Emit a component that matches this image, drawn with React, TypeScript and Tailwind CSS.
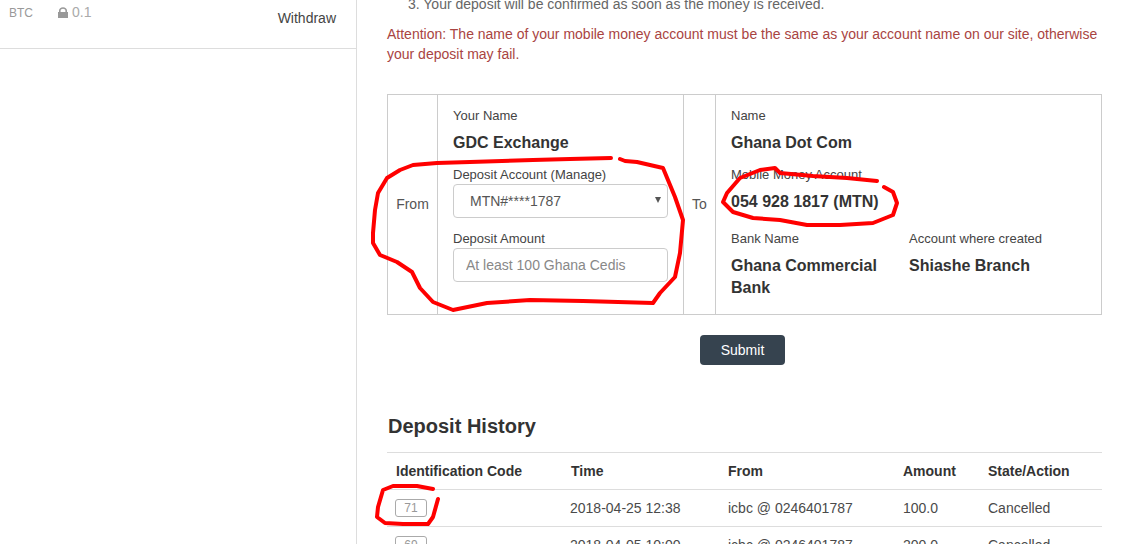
const rows = [
  { code: "71", time: "2018-04-25 12:38", from: "icbc @ 0246401787", amount: "100.0", state: "Cancelled" },
  { code: "69", time: "2018-04-05 10:00", from: "icbc @ 0246401787", amount: "200.0", state: "Cancelled" },
];

const Field = ({ label, value }: { label: string; value: string }) => (
  <div>
    <div className="text-[13px] leading-5 text-[#444]">{label}</div>
    <div className="mt-[6px] text-base font-bold leading-[22px] text-[#333]">{value}</div>
  </div>
);

const App = () => {
  return (
    <div className="relative flex h-[544px] w-[1142px] overflow-hidden bg-white font-['Liberation_Sans',Arial,sans-serif] text-sm text-[#333]">
      <aside className="h-full w-[357px] shrink-0 border-r border-[#ddd]">
        <div className="flex h-[49px] border-b border-[#ddd] pl-[9px] pr-5">
          <span className="mt-[5px] text-xs leading-4 text-[#999]">BTC</span>
          <span className="ml-[25px] mt-[4px] flex h-4 items-center gap-[4px] text-sm text-[#aaa]">
            <svg width="10" height="11" viewBox="0 0 10 11" fill="#999">
              <path d="M1 5V3.6C1 1.6 2.8 0.3 5 0.3S9 1.6 9 3.6V5H10V11H0V5ZM2.6 5H7.4V3.6C7.4 2.4 6.3 1.7 5 1.7S2.6 2.4 2.6 3.6Z" />
            </svg>
            0.1
          </span>
          <span className="ml-auto mt-[8px] leading-5 text-[#444]">Withdraw</span>
        </div>
      </aside>

      <main className="w-[745px] pl-[30px]">
        <p className="-mt-[6px] pl-[21px] leading-5 text-[#666]">3. Your deposit will be confirmed as soon as the money is received.</p>
        <p className="mt-[10px] leading-5 text-[#a94442]">
          Attention: The name of your mobile money account must be the same as your account name on our site, otherwise your deposit may fail.
        </p>

        <div className="mt-[30px] flex h-[221px] w-[715px] border border-[#ccc]">
          <div className="flex w-[50px] items-center justify-center border-r border-[#ccc] pb-[2px] text-[#555]">From</div>
          <div className="w-[246px] border-r border-[#ccc] px-[15px] pt-[11px]">
            <Field label="Your Name" value="GDC Exchange" />
            <div className="mt-[11px] text-[13px] leading-5 text-[#444]">Deposit Account (Manage)</div>
            <div className="relative -mt-px flex h-[34px] w-[215px] items-center rounded border border-[#ccc] pl-4 text-[#555]">
              MTN#****1787
              <span className="absolute right-[6px] top-[12px] h-0 w-0 border-x-[3px] border-t-[6px] border-x-transparent border-t-[#555]" />
            </div>
            <div className="mt-[11px] text-[13px] leading-5 text-[#444]">Deposit Amount</div>
            <input
              readOnly
              placeholder="At least 100 Ghana Cedis"
              className="-mt-px h-[34px] w-[215px] rounded border border-[#ccc] px-3 text-sm text-[#555] placeholder:text-[#888]"
            />
          </div>
          <div className="flex w-[32px] items-center justify-center border-r border-[#ccc] pb-[2px] text-[#555]">To</div>
          <div className="flex-1 px-[15px] pt-[11px]">
            <Field label="Name" value="Ghana Dot Com" />
            <div className="mt-[11px]">
              <Field label="Mobile Money Account" value="054 928 1817 (MTN)" />
            </div>
            <div className="mt-[16px] flex">
              <div className="w-[178px] pr-6">
                <Field label="Bank Name" value="Ghana Commercial Bank" />
              </div>
              <Field label="Account where created" value="Shiashe Branch" />
            </div>
          </div>
        </div>

        <div className="mt-[20px] flex w-[715px] justify-center pr-1">
          <button type="button" className="h-[30px] w-[85px] rounded-[4px] bg-[#36434f] text-sm text-white">
            Submit
          </button>
        </div>

        <h2 className="mt-[47px] pl-px text-xl font-bold leading-[28px] text-[#333]">Deposit History</h2>

        <div className="mt-[12px] w-[715px] border-t border-[#ddd]">
          <div className="grid h-[37px] grid-cols-[175px_157px_175px_85px_1fr] items-center border-b border-[#ddd] pl-[9px] font-bold">
            <span>Identification Code</span>
            <span>Time</span>
            <span>From</span>
            <span>Amount</span>
            <span>State/Action</span>
          </div>
          {rows.map((r) => (
            <div
              key={r.code}
              className="grid h-[37px] grid-cols-[175px_158px_175px_85px_1fr] items-center border-b border-[#ddd] pl-2 text-[#4a4a4a]"
            >
              <span className="flex h-[18px] w-8 items-center justify-center rounded-[3px] border border-[#aaa] text-xs text-[#999]">
                {r.code}
              </span>
              <span>{r.time}</span>
              <span>{r.from}</span>
              <span>{r.amount}</span>
              <span>{r.state}</span>
            </div>
          ))}
        </div>
      </main>

      {/* red pen scribbles on top of the page */}
      <svg className="pointer-events-none absolute left-0 top-0" width="1142" height="544" fill="none" stroke="#f00" strokeWidth="4" strokeLinecap="round" strokeLinejoin="round">
        <path d="M611 158L570 159L533 160L470 162L437 163L413 165L400 170L387 178L378 193L375 210L373 233L373 243L380 255L397 262L412 272L420 288L433 302L453 310L487 303L530 300L583 301L653 303L660 293L675 277L680 253L683 220L675 197L663 168L637 162L625 161L620 159" />
        <path d="M877 181L847 178L813 176L780 173L775 168L760 170L740 178L727 193L723 202L733 212L753 218L780 220L807 225L840 225L873 223L893 215L897 203L893 192L884 187" />
        <path d="M433 489L417 486L393 486L383 490L378 507L377 517L385 523L403 524L428 524L433 517L438 499" />
      </svg>
    </div>
  );
};

export default App;
